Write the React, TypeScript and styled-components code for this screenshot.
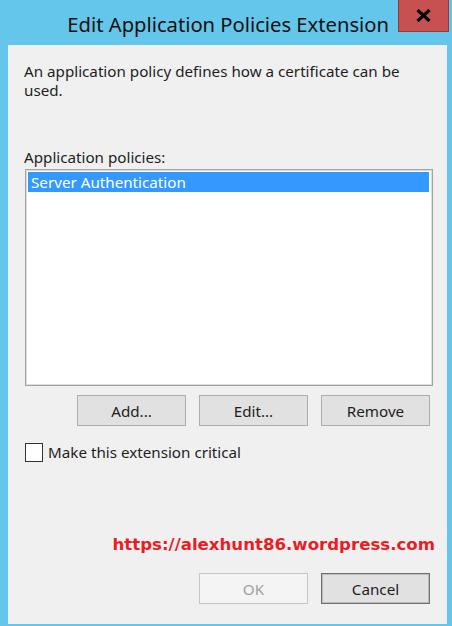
import React from "react";
import styled, { createGlobalStyle } from "styled-components";

const Global = createGlobalStyle`
  html, body { margin: 0; padding: 0; background: #63c6ea; }
  * { box-sizing: border-box; }
`;

const Frame = styled.div`
  width: 452px;
  height: 626px;
  background: #63c6ea;
  display: flex;
  flex-direction: column;
  font-family: "Noto Sans", "Open Sans", sans-serif;
  color: #1e1e1e;
`;

const TitleBar = styled.div`
  height: 45px;
  display: flex;
  justify-content: flex-end;
  align-items: flex-start;
  padding-right: 3px;
`;

const Title = styled.div`
  font-size: 20.2px;
  line-height: 24px;
  margin-top: 12px;
  margin-right: 9px;
  color: #111;
  white-space: nowrap;
`;

const CloseButton = styled.div`
  width: 51px;
  height: 32px;
  background: #c75050;
  border: 1px solid #8e3b3b;
  border-top: none;
  display: flex;
  align-items: center;
  justify-content: center;
`;

const Panel = styled.div`
  flex: 1;
  margin: 0 5px 2px 8px;
  background: #f0f0f0;
  display: flex;
  flex-direction: column;
  padding: 17px 14px 0 16px;
  font-size: 15.2px;
`;

const Description = styled.div`
  line-height: 19px;
`;

const Label = styled.div`
  margin-top: 48px;
  line-height: 18px;
`;

const ListBox = styled.div`
  margin: 3px 0 0 1px;
  width: 408px;
  height: 217px;
  background: #fff;
  border: 1px solid #a3a3a3;
  box-shadow: inset 0 0 0 1px #dcdcdc;
  padding: 2px 3px 0 2px;
`;

const ListItem = styled.div<{ $selected?: boolean }>`
  height: 20px;
  line-height: 20px;
  padding-left: 3px;
  background: ${(p) => (p.$selected ? "#3399ff" : "transparent")};
  color: ${(p) => (p.$selected ? "#fff" : "#1e1e1e")};
`;

const ButtonRow = styled.div<{ $top: number }>`
  display: flex;
  justify-content: flex-end;
  gap: 13px;
  margin-top: ${(p) => p.$top}px;
  padding-right: 3px;
`;

const Button = styled.div<{ $variant?: "default" | "disabled" | "focused" }>`
  width: 109px;
  height: 31px;
  display: flex;
  align-items: center;
  justify-content: center;
  background: ${(p) => (p.$variant === "disabled" ? "#f4f4f4" : "#e1e1e1")};
  border: 1px solid
    ${(p) =>
      p.$variant === "disabled"
        ? "#c6c6c6"
        : p.$variant === "focused"
        ? "#707070"
        : "#adadad"};
  box-shadow: ${(p) =>
    p.$variant === "focused" ? "inset 0 0 0 1px #bcbcbc" : "none"};
  color: ${(p) => (p.$variant === "disabled" ? "#a0a0a0" : "#1e1e1e")};
  font-size: 15.2px;
`;

const CheckRow = styled.label`
  display: flex;
  align-items: center;
  gap: 5px;
  margin-top: 17px;
  margin-left: 1px;
  line-height: 19px;
`;

const CheckBox = styled.span`
  width: 18px;
  height: 19px;
  background: #fff;
  border: 1px solid #333;
`;

const Url = styled.div`
  margin: 73px -2px 0 0;
  align-self: flex-end;
  font-family: "DejaVu Sans", Verdana, sans-serif;
  font-weight: bold;
  font-size: 16.6px;
  line-height: 20px;
  color: #ec1c24;
`;

export default function App() {
  return (
    <>
      <Global />
      <Frame>
        <TitleBar>
          <Title>Edit Application Policies Extension</Title>
          <CloseButton>
            <svg width="15" height="13" viewBox="0 0 15 13">
              <path d="M1.5 1 L13.5 12 M13.5 1 L1.5 12" stroke="#000" strokeWidth="3.2" />
            </svg>
          </CloseButton>
        </TitleBar>
        <Panel>
          <Description>
            An application policy defines how a certificate can be
            <br />
            used.
          </Description>
          <Label>Application policies:</Label>
          <ListBox>
            <ListItem $selected>Server Authentication</ListItem>
          </ListBox>
          <ButtonRow $top={9}>
            <Button>Add...</Button>
            <Button>Edit...</Button>
            <Button>Remove</Button>
          </ButtonRow>
          <CheckRow>
            <CheckBox />
            <span>Make this extension critical</span>
          </CheckRow>
          <Url>https://alexhunt86.wordpress.com</Url>
          <ButtonRow $top={18}>
            <Button $variant="disabled">OK</Button>
            <Button $variant="focused">Cancel</Button>
          </ButtonRow>
        </Panel>
      </Frame>
    </>
  );
}
